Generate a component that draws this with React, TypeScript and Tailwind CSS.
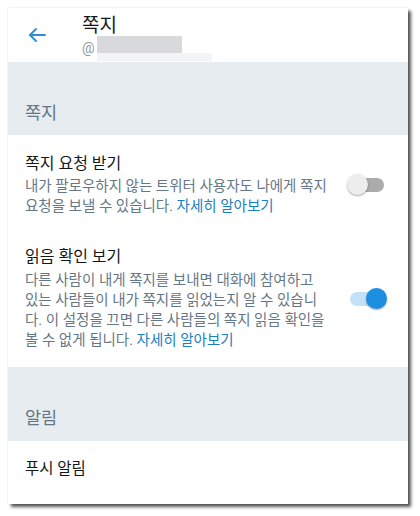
const font = { fontFamily: '"Roboto", "Noto Sans CJK KR", sans-serif' };

const Toggle = ({ on }: { on: boolean }) => (
  <div className="relative w-[40px] h-[22px] shrink-0">
    <div
      className={`absolute left-[3px] right-[3px] top-[4px] h-[14px] rounded-full ${
        on ? 'bg-[#c4e2f7]' : 'bg-[#ababab]'
      }`}
    />
    <div
      className={`absolute top-0 w-[21px] h-[21px] rounded-full shadow-[0_1px_2px_rgba(0,0,0,0.35)] ${
        on ? 'right-0 bg-[#1d8fe1]' : 'left-0 bg-[#ededed]'
      }`}
    />
  </div>
);

const Link = ({ children }: { children: string }) => (
  <span className="text-[#1b7fc0]">{children}</span>
);

export default function App() {
  return (
    <div className="w-[420px] h-[516px] bg-white pt-2 pl-2" style={font}>
      <div className="w-[400px] h-[496px] bg-white flex flex-col overflow-hidden shadow-[0_0_1px_rgba(0,0,0,0.25),3px_3px_3px_rgba(0,0,0,0.65)]">
        {/* header */}
        <div className="h-[54px] shrink-0 flex items-start">
          <div className="w-[74px] pl-5 pt-[19px]">
            <svg width="18" height="16" viewBox="0 0 18 16" fill="none" stroke="#2a8fd8" strokeWidth="1.9" strokeLinecap="round" strokeLinejoin="round">
              <path d="M17 8H2" />
              <path d="M8 2L2 8l6 6" />
            </svg>
          </div>
          <div className="flex flex-col pt-[6px]">
            <div className="text-[19px] leading-6 text-[#14171a]">쪽지</div>
            <div className="flex items-start -mt-[2px]">
              <span className="text-[14px] leading-[20px] text-[#8899a6] pt-[2px]">@</span>
              <div className="flex flex-col ml-[2px]">
                <div className="w-[85px] h-[17px] bg-[#d8d9da]" />
                <div className="w-[115px] h-[8px] bg-[#f3f4f5]" />
              </div>
            </div>
          </div>
        </div>

        {/* section: 쪽지 */}
        <div className="h-[73px] shrink-0 bg-[#e6ecf0] pt-[39px] pl-[17px]">
          <div className="text-[17.5px] leading-6 text-[#657786]">쪽지</div>
        </div>

        <div className="flex items-center pl-[17px] pr-[21px] pt-[18px] pb-[13px]">
          <div className="flex-1">
            <div className="text-[16px] leading-[22px] text-[#14171a]">쪽지 요청 받기</div>
            <div className="mt-[2px] text-[14.5px] leading-5 text-[#657786] whitespace-nowrap">
              내가 팔로우하지 않는 트위터 사용자도 나에게 쪽지
              <br />
              요청을 보낼 수 있습니다. <Link>자세히 알아보기</Link>
            </div>
          </div>
          <Toggle on={false} />
        </div>

        <div className="flex items-center pl-[17px] pr-[21px] pt-4 pb-4">
          <div className="flex-1">
            <div className="text-[16px] leading-[22px] text-[#14171a]">읽음 확인 보기</div>
            <div className="mt-[3px] text-[14.5px] leading-5 text-[#657786] whitespace-nowrap">
              다른 사람이 내게 쪽지를 보내면 대화에 참여하고
              <br />
              있는 사람들이 내가 쪽지를 읽었는지 알 수 있습니
              <br />
              다. 이 설정을 끄면 다른 사람들의 쪽지 읽음 확인을
              <br />
              볼 수 없게 됩니다. <Link>자세히 알아보기</Link>
            </div>
          </div>
          <Toggle on={true} />
        </div>

        {/* section: 알림 */}
        <div className="h-[74px] shrink-0 bg-[#e6ecf0] pt-[39px] pl-[17px]">
          <div className="text-[17.5px] leading-6 text-[#657786]">알림</div>
        </div>

        <div className="flex-1 pl-[17px] pt-[17px]">
          <div className="text-[15.5px] leading-[22px] text-[#14171a]">푸시 알림</div>
        </div>
      </div>
    </div>
  );
}
